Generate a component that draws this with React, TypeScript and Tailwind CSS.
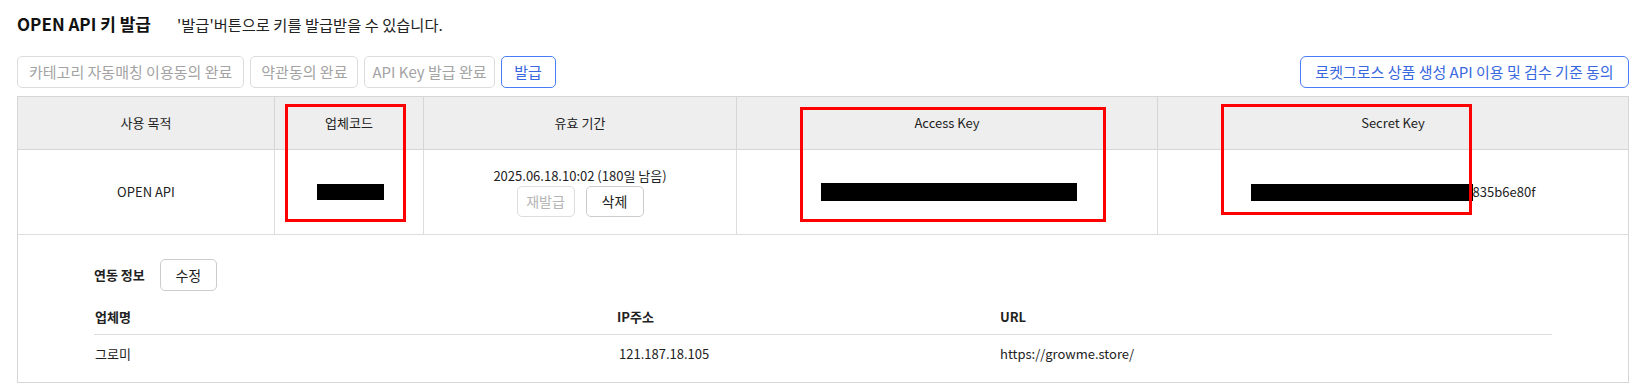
import React from "react";

const font = "font-['Noto_Sans_CJK_KR','Liberation_Sans',sans-serif]";

// 상단 안내 버튼 (완료 상태는 회색)
function StepButton({ label, px = "px-[11px]" }: { label: string; px?: string }) {
  return (
    <button
      type="button"
      className={`h-[32px] ${px} rounded-[5px] border border-[#dcdcdc] text-[#a3a3a3] text-[15px] bg-white`}
    >
      {label}
    </button>
  );
}

export default function App() {
  return (
    <div className={`${font} bg-white text-[#222] w-[1639px] h-[390px] pt-[10px] pl-[17px] pr-[10px]`}>
      {/* 타이틀 */}
      <div className="flex items-center h-[28px]">
        <h1 className="w-[160px] text-[17px] font-bold text-[#111]">OPEN API 키 발급</h1>
        <p className="text-[15.3px] text-[#222]">'발급'버튼으로 키를 발급받을 수 있습니다.</p>
      </div>

      {/* 단계 버튼 */}
      <div className="mt-[18px] flex items-center justify-between">
        <div className="flex items-center gap-[6px]">
          <StepButton label="카테고리 자동매칭 이용동의 완료" />
          <StepButton label="약관동의 완료" px="px-[10px]" />
          <StepButton label="API Key 발급 완료" px="px-[7px]" />
          <button type="button" className="h-[32px] w-[55px] rounded-[5px] border border-[#4a7cf5] text-[#3768e0] text-[15px] bg-white">
            발급
          </button>
        </div>
        <button type="button" className="h-[32px] w-[329px] rounded-[6px] border border-[#4a7cf5] text-[#3768e0] text-[15px] bg-white">
          로켓그로스 상품 생성 API 이용 및 검수 기준 동의
        </button>
      </div>

      {/* 키 테이블 */}
      <div className="relative mt-[8px] border border-[#d6d6d6] text-[13px] text-[#222]">
        <div className="grid grid-cols-[256px_149px_313px_421px_1fr] h-[53px] bg-[#eeeeee] border-b border-[#d6d6d6]">
          <div className="flex items-center justify-center">사용 목적</div>
          <div className="flex items-center justify-center border-l border-[#d6d6d6]">업체코드</div>
          <div className="flex items-center justify-center border-l border-[#d6d6d6]">유효 기간</div>
          <div className="flex items-center justify-center border-l border-[#d6d6d6]">Access Key</div>
          <div className="flex items-center justify-center border-l border-[#d6d6d6]">Secret Key</div>
        </div>
        <div className="grid grid-cols-[256px_149px_313px_421px_1fr] h-[85px] border-b border-[#dddddd]">
          <div className="flex items-center justify-center">OPEN API</div>
          <div className="flex items-center justify-center border-l border-[#dddddd]">
            <span className="block w-[67px] h-[16px] bg-black ml-[2px]" />
          </div>
          <div className="flex flex-col items-center justify-center border-l border-[#dddddd]">
            <span className="leading-[17px]">2025.06.18.10:02 (180일 남음)</span>
            <div className="mt-[2px] flex items-center gap-[11px]">
              <button type="button" className="h-[31px] w-[58px] rounded-[5px] border border-[#dddddd] text-[#b5b5b5] text-[14px] bg-white">
                재발급
              </button>
              <button type="button" className="h-[31px] w-[58px] rounded-[5px] border border-[#cccccc] text-[#222] text-[14px] bg-white">
                삭제
              </button>
            </div>
          </div>
          <div className="flex items-center justify-center border-l border-[#dddddd]">
            <span className="block w-[256px] h-[18px] bg-black ml-[3px]" />
          </div>
          <div className="flex items-center justify-center border-l border-[#dddddd]">
            <span className="flex items-center">
              <span className="block w-[222px] h-[17px] bg-black" />
              <span>835b6e80f</span>
            </span>
          </div>
        </div>

        {/* 연동 정보 */}
        <div className="pt-[24px] pb-[9px] px-[76px]">
          <div className="flex items-center h-[32px]">
            <span className="font-bold text-[13px]">연동 정보</span>
            <button type="button" className="ml-[15px] h-[32px] w-[57px] rounded-[5px] border border-[#cccccc] text-[14px] text-[#222] bg-white">
              수정
            </button>
          </div>
          <div className="mt-[8px] grid grid-cols-[523px_383px_1fr] h-[36px] items-center border-b border-[#dddddd] font-bold">
            <div className="pl-[1px]">업체명</div>
            <div>IP주소</div>
            <div>URL</div>
          </div>
          <div className="grid grid-cols-[523px_383px_1fr] h-[38px] items-center">
            <div className="pl-[1px]">그로미</div>
            <div className="pl-[2px]">121.187.18.105</div>
            <div>https://growme.store/</div>
          </div>
        </div>

        {/* 표시용 빨간 박스 */}
        <div className="absolute left-[267px] top-[7px] w-[121px] h-[118px] border-[3px] border-[#ff0000]" />
        <div className="absolute left-[782px] top-[10px] w-[306px] h-[115px] border-[3px] border-[#ff0000]" />
        <div className="absolute left-[1203px] top-[7px] w-[251px] h-[111px] border-[3px] border-[#ff0000]" />
      </div>
    </div>
  );
}
